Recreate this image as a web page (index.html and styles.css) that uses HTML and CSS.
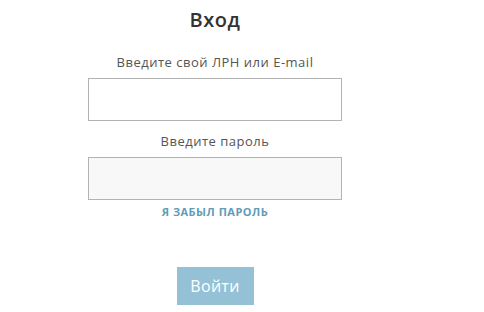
FILE: index.html
```html
<!DOCTYPE html>
<html lang="ru">
<head>
  <meta charset="UTF-8" />
  <title>Вход</title>
  <meta name="viewport" content="width=device-width, initial-scale=1.0" />
  <link rel="stylesheet" href="styles.css">
</head>
<body>

<div class="login">
  <h1>Вход</h1>
  <form class="login-form">
    <label for="login">Введите свой ЛРН или E-mail</label>
    <input type="text" id="login" />
    <label for="password">Введите пароль</label>
    <input type="password" id="password" class="filled" />
    <a href="#restore" class="forgot">Я забыл пароль</a>
    <button class="btn" type="submit">Войти</button>
  </form>
</div>

</body>
</html>
```

FILE: styles.css
```css
* { box-sizing: border-box; }
body { font-family: "Open Sans", Arial, sans-serif; margin: 0; background: #fff; color: #555; }

.login {
  width: 254px;
  margin-left: 88px;
  text-align: center;
}

.login h1 {
  font-size: 20px;
  font-weight: 600;
  letter-spacing: 0.5px;
  color: #333;
  margin: 0;
  padding-top: 8px;
  line-height: 24px;
}

.login-form {
  display: flex;
  flex-direction: column;
  align-items: center;
  margin-top: 21px;
}

.login-form label {
  font-size: 13px;
  line-height: 18px;
  letter-spacing: 0.5px;
  color: #555;
}

.login-form input {
  width: 100%;
  height: 43px;
  margin: 7px 0 11px;
  border: 1px solid #b3b3b3;
  background: #fff;
  outline: none;
}

.login-form input.filled { background: #f8f8f8; margin-bottom: 4px; }

.forgot {
  font-size: 11px;
  font-weight: 700;
  letter-spacing: 0.5px;
  text-transform: uppercase;
  color: #5f9cb6;
  text-decoration: none;
  line-height: 16px;
}

.btn {
  width: 77px;
  height: 38px;
  margin-top: 47px;
  border: none;
  background: #95c1d6;
  color: #fff;
  font-family: inherit;
  font-size: 16px;
  letter-spacing: 0.3px;
  cursor: pointer;
}
```
